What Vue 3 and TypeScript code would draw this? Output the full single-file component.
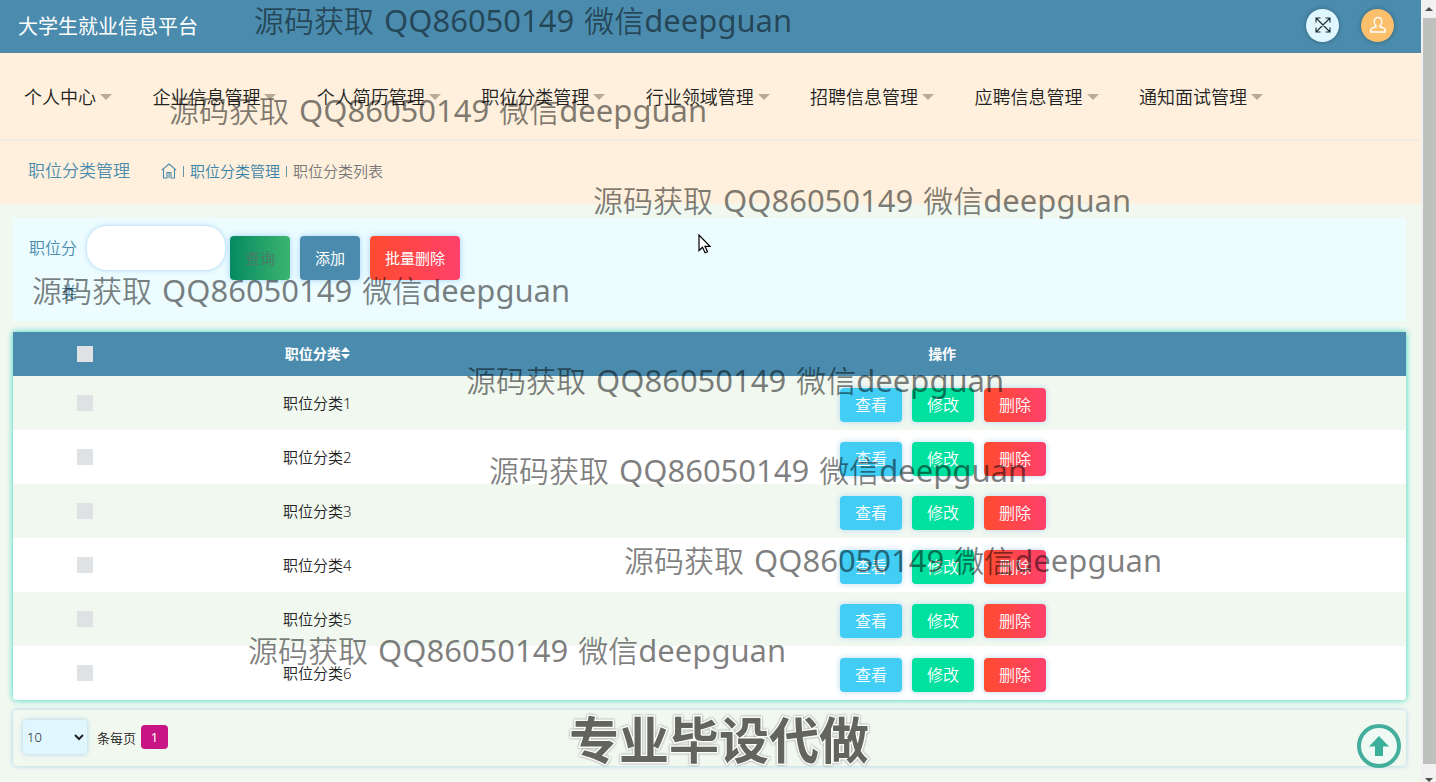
<script setup lang="ts">
import { ref } from 'vue'

const menus: string[] = [
  '个人中心',
  '企业信息管理',
  '个人简历管理',
  '职位分类管理',
  '行业领域管理',
  '招聘信息管理',
  '应聘信息管理',
  '通知面试管理',
]

interface Row {
  id: number
  name: string
  checked: boolean
}

const rows = ref<Row[]>(
  Array.from({ length: 6 }, (_, i) => ({ id: i + 1, name: `职位分类${i + 1}`, checked: false })),
)
const keyword = ref('')
const allChecked = ref(false)
const pageSize = ref('10')

const toggleAll = () => rows.value.forEach((r) => (r.checked = allChecked.value))

const marks = [
  { left: 254, top: 0 },
  { left: 169, top: 90 },
  { left: 593, top: 180 },
  { left: 32, top: 270 },
  { left: 466, top: 360 },
  { left: 489, top: 450 },
  { left: 624, top: 540 },
  { left: 248, top: 630 },
]
</script>

<template>
  <div class="window">
    <div class="page">
      <header class="top">
        <h1>大学生就业信息平台</h1>
        <div class="top-actions">
          <button class="round full" type="button" aria-label="全屏">
            <svg width="18" height="18" viewBox="0 0 18 18" fill="none" stroke="#1c2b33" stroke-width="1.1">
              <path d="M2 2l14 14M16 2L2 16M2 6.500V2h4.500M11.500 2H16v4.500M16 11.500V16h-4.500M6.500 16H2v-4.500" />
            </svg>
          </button>
          <button class="round user" type="button" aria-label="用户">
            <svg width="18" height="18" viewBox="0 0 18 18" fill="none" stroke="#fff" stroke-width="1.4">
              <path d="M9 1.500c-2.600 0-3.800 1.700-3.800 4 0 2 .8 3.400 1.800 4.200v1.100c-2.600.7-5 1.700-5.300 3.300-.1.700 0 1.400.1 1.900h14.400c.1-.5.200-1.200.1-1.900-.3-1.600-2.700-2.600-5.300-3.300V9.700c1-.8 1.800-2.200 1.800-4.200 0-2.300-1.200-4-3.800-4z" />
            </svg>
          </button>
        </div>
      </header>

      <nav class="menu">
        <a v-for="m in menus" :key="m" href="#">{{ m }}<i class="caret"></i></a>
      </nav>

      <div class="crumbs">
        <h2>职位分类管理</h2>
        <a href="#" class="home" aria-label="首页">
          <svg width="16" height="16" viewBox="0 0 16 16" fill="none" stroke="#4b8cae" stroke-width="1.1">
            <path d="M.8 7.200L8 1l7.200 6.200M2.500 6v9H6V9.500h4V15h3.500V6M8 10v5" />
          </svg>
        </a>
        <i class="bar"></i>
        <a href="#">职位分类管理</a>
        <i class="bar"></i>
        <span>职位分类列表</span>
      </div>

      <main>
        <form class="filter" @submit.prevent>
          <label for="kw">职位分类</label>
          <input id="kw" v-model="keyword" type="text" />
          <div class="filter-buttons">
            <button type="submit" class="search">查询</button>
            <button type="button" class="add">添加</button>
            <button type="button" class="batch">批量删除</button>
          </div>
        </form>

        <table>
          <thead>
            <tr>
              <th class="c-check">
                <input v-model="allChecked" type="checkbox" aria-label="全选" @change="toggleAll" />
              </th>
              <th class="c-name">
                <span class="sort">职位分类<svg width="9" height="12" viewBox="0 0 9 12" fill="#fff"><path d="M0 5L4.500 0 9 5zM0 7h9l-4.500 5z" /></svg></span>
              </th>
              <th class="c-ops">操作</th>
            </tr>
          </thead>
          <tbody>
            <tr v-for="r in rows" :key="r.id">
              <td><input v-model="r.checked" type="checkbox" :aria-label="r.name" /></td>
              <td class="name">{{ r.name }}</td>
              <td>
                <div class="ops">
                  <button type="button" class="view">查看</button>
                  <button type="button" class="edit">修改</button>
                  <button type="button" class="batch">删除</button>
                </div>
              </td>
            </tr>
          </tbody>
        </table>

        <div class="pager">
          <select id="size" v-model="pageSize">
            <option>10</option>
            <option>25</option>
            <option>50</option>
          </select>
          <label for="size">条每页</label>
          <button type="button">1</button>
        </div>
      </main>
    </div>

    <div class="scroll" aria-hidden="true">
      <svg width="15" height="18" viewBox="0 0 15 18" fill="#505050"><path d="M2 11l4-4 4 4z" /></svg>
      <div class="thumb"></div>
      <svg width="15" height="18" viewBox="0 0 15 18" fill="#505050"><path d="M2 14l4 4 4-4z" /></svg>
    </div>

    <button class="to-top" type="button" aria-label="返回顶部">
      <svg width="20" height="20" viewBox="0 0 20 20" fill="#3cb09a"><path d="M10 0l10 10.500h-6V20H6v-9.500H0z" /></svg>
    </button>

    <div
      v-for="(m, i) in marks"
      :key="i"
      class="mark"
      :style="{ left: m.left + 'px', top: m.top + 'px' }"
    >
      <span>源码获取</span>
      <span class="latin">QQ86050149</span>
      <span>微信<span class="latin">deepguan</span></span>
    </div>
    <div class="banner">专业毕设代做</div>
    <svg class="cursor" width="13" height="20" viewBox="0 0 13 20" fill="#fff" stroke="#000" stroke-width="1.2">
      <path d="M1 1v15.500l3.500-3.300 2.600 5.600 2.400-1.100L7 12.300h5z" />
    </svg>
  </div>
</template>

<style>
body {
  margin: 0;
}
</style>

<style scoped>
* {
  box-sizing: border-box;
}
.window {
  position: relative;
  display: flex;
  min-height: 100vh;
  overflow: hidden;
  background: #f1f8f0;
  font-family: 'Noto Sans', 'Noto Sans CJK SC', sans-serif;
  font-weight: 350;
  font-size: 15px;
  color: #222;
}
h1,
h2 {
  margin: 0;
  font-weight: 350;
}
a {
  text-decoration: none;
  color: inherit;
}
button,
input,
select {
  font: inherit;
  border: 0;
  margin: 0;
  padding: 0;
}
.page {
  flex: 1;
  min-width: 0;
}
.top {
  display: flex;
  justify-content: space-between;
  align-items: center;
  height: 53px;
  padding: 0 27px 0 18px;
  background: #4b8cae;
  border-bottom: 1px solid #5c88a5;
}
h1 {
  padding-top: 2px;
  font-size: 20px;
  font-weight: 400;
  line-height: 50px;
  color: #fff;
}
.top-actions {
  display: flex;
  gap: 22px;
  padding-bottom: 2px;
}
.round {
  display: flex;
  align-items: center;
  justify-content: center;
  width: 33px;
  height: 33px;
  border-radius: 50%;
  box-shadow: 0 0 5px rgba(0, 0, 0, 0.3);
}
.full {
  background: #e0f7ff;
}
.user {
  background: #fcc06c;
}
.menu {
  display: flex;
  justify-content: space-between;
  align-items: center;
  height: 88px;
  padding: 1px 158px 0 24px;
  background: #fef0dc;
  border-bottom: 2px solid #f2ebdf;
  font-size: 18px;
  line-height: 26px;
}
.menu a {
  display: flex;
  align-items: center;
}
.caret {
  margin-left: 4px;
  border: 6px solid transparent;
  border-top: 6px solid #b9aa98;
  border-bottom: 0;
}
.crumbs {
  display: flex;
  align-items: center;
  height: 62px;
  padding: 0 28px 2px;
  background: #fef0dc;
  box-shadow: 0 1px 3px #fef0dc;
  color: #777;
  line-height: 24px;
}
.crumbs h2 {
  margin-right: 31px;
  font-size: 17px;
  color: #4b8cae;
}
.crumbs a {
  color: #3a83a8;
}
.home {
  display: flex;
}
.bar {
  width: 1px;
  height: 11px;
  margin: 0 6px;
  background: #6594a8;
}
main {
  padding: 15px 15px 16px 13px;
}
.filter {
  display: flex;
  align-items: flex-start;
  min-height: 103px;
  padding: 8px 0 7px;
  background: #ecfcff;
}
.filter label {
  width: 64px;
  padding-left: 13px;
  font-size: 16px;
  line-height: 44px;
  text-align: right;
  color: #4b8cae;
}
.filter input {
  width: 138px;
  height: 44px;
  margin: 0 5px 0 10px;
  padding: 0 12px;
  border-radius: 20px;
  background: #fff;
  box-shadow: 0 0 5px #a5d2f5;
}
.filter-buttons {
  display: flex;
  gap: 10px;
  padding-top: 10px;
}
.filter-buttons button {
  height: 44px;
  padding: 0 15px 1px;
  border-radius: 4px;
  color: #fff;
  font-weight: 400;
  box-shadow: 0 0 6px #a5d2f5;
}
.filter-buttons .search {
  color: #4b7a68;
  background: linear-gradient(90deg, #058a62, #3cb46e);
}
.add {
  background: #4b8cae;
}
.batch {
  background: linear-gradient(90deg, #ff4b2f, #ff416c);
}
table {
  width: 100%;
  margin-top: 11px;
  table-layout: fixed;
  border-collapse: collapse;
  border-radius: 0 0 4px 4px;
  background: #fff;
  box-shadow: 0 0 6px #30d5bd;
  overflow: hidden;
  text-align: center;
}
th,
td {
  padding: 0;
}
th {
  height: 44px;
  background: #4b8cae;
  color: #fff;
  font-size: 14px;
  font-weight: 700;
}
.c-check {
  width: 10.3%;
}
.c-name {
  width: 23.1%;
}
.c-name,
.c-ops,
.name {
  padding-bottom: 2px;
}
.sort {
  display: inline-flex;
  align-items: center;
}
td {
  height: 54px;
}
tbody tr:nth-child(odd) {
  background: #f1f8f0;
}
td input,
th input {
  appearance: none;
  display: block;
  width: 16px;
  height: 16px;
  margin: 0 auto;
  background: #dee2e4;
}
input:checked {
  background: #4b8cae;
}
.ops {
  display: flex;
  justify-content: center;
  gap: 10px;
  padding: 4px 0 0 2px;
}
.ops button {
  width: 62px;
  height: 34px;
  padding-bottom: 2px;
  border-radius: 4px;
  color: #fff;
  font-size: 16px;
  font-weight: 350;
  box-shadow: 0 0 6px #b9d9f0;
}
.view {
  background: #42cdf5;
}
.edit {
  background: #00e1a0;
}
.pager {
  display: flex;
  align-items: center;
  height: 56px;
  margin-top: 10px;
  padding: 0 10px 2px;
  border-radius: 4px;
  box-shadow: 0 0 5px #a5cfe8;
  font-size: 13px;
}
.pager select {
  width: 64px;
  height: 34px;
  border-radius: 4px;
  background: #e0f7ff;
  color: #222;
  box-shadow: 0 0 5px #a5cfe8;
}
.pager label {
  margin: 0 5px 0 10px;
}
.pager button {
  width: 27px;
  height: 24px;
  border-radius: 4px;
  background: #c71585;
  color: #fff;
  font-weight: 400;
}
.scroll {
  display: flex;
  flex-direction: column;
  width: 15px;
  padding-left: 2px;
  background: #f1f1f1;
}
.scroll svg {
  flex: none;
}
.thumb {
  flex: 1;
  background: #bfc1bf;
}
.to-top {
  position: absolute;
  right: 35px;
  bottom: 14px;
  display: flex;
  align-items: center;
  justify-content: center;
  width: 44px;
  height: 44px;
  border: 4px solid #43ae9c;
  border-radius: 50%;
  background: #effaf4;
}
.mark {
  position: absolute;
  display: flex;
  align-items: baseline;
  gap: 10px;
  font-size: 30px;
  line-height: 40px;
  white-space: nowrap;
  color: rgba(0, 0, 0, 0.5);
  pointer-events: none;
}
.latin {
  font-size: 31px;
  font-weight: 400;
}
.banner {
  position: absolute;
  left: 569px;
  top: 710px;
  font-size: 50px;
  line-height: 60px;
  font-weight: 700;
  white-space: nowrap;
  color: #62645d;
  -webkit-text-stroke: 3px #fafdf8;
  paint-order: stroke fill;
  filter: drop-shadow(0 0 1px #888);
  pointer-events: none;
}
.cursor {
  position: absolute;
  left: 698px;
  top: 234px;
}
</style>
